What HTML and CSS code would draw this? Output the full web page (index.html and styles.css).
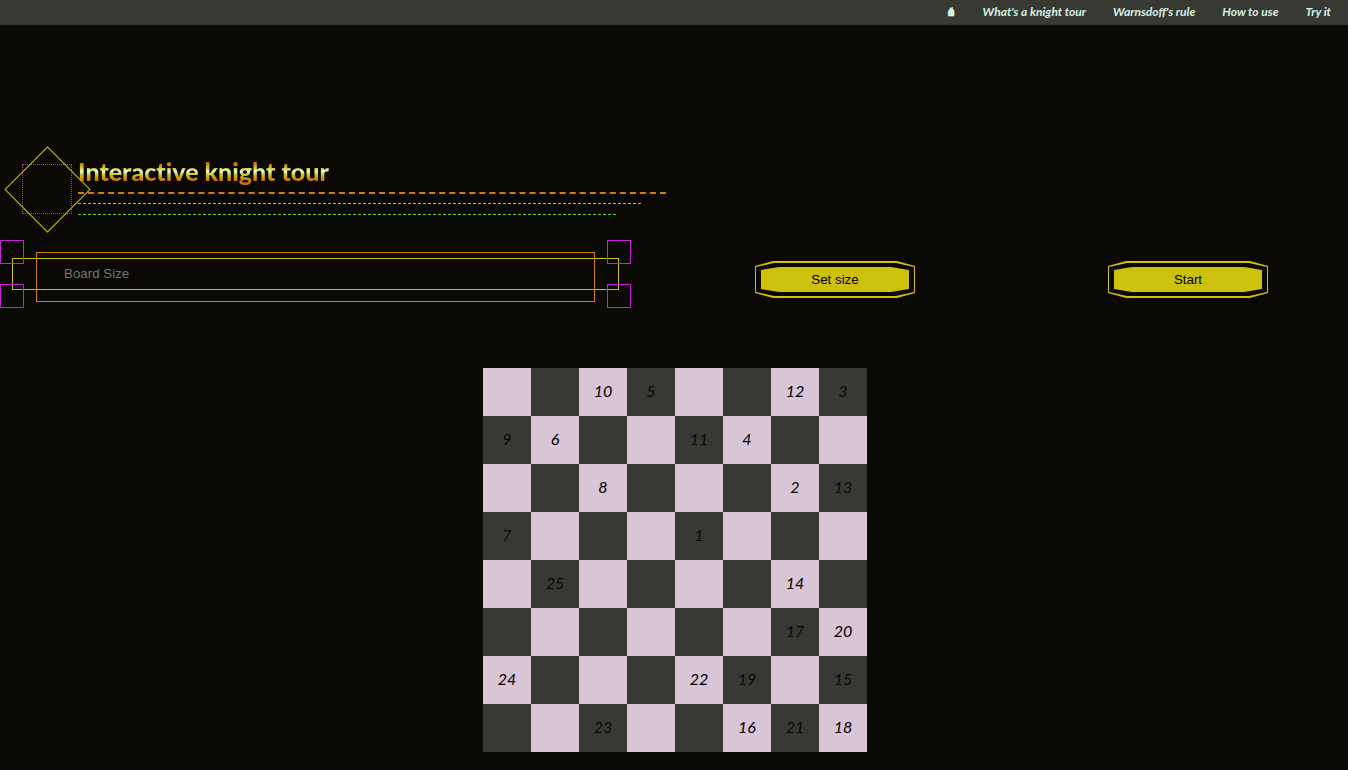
FILE: index.html
```
<!DOCTYPE html>
<html lang="en">
<head>
<meta charset="utf-8">
<title>Interactive knight tour</title>
<link rel="stylesheet" href="styles.css">
</head>
<body>
<header class="topbar">
  <nav class="nav">
    <a class="nav-link" href="#top">♞</a>
    <a class="nav-link" href="#knight">What's a knight tour</a>
    <a class="nav-link" href="#rule">Warnsdoff's rule</a>
    <a class="nav-link" href="#use">How to use</a>
    <a class="nav-link" href="#try">Try it</a>
  </nav>
</header>
<main>
  <section class="intro">
    <div class="emblem"></div>
    <div class="intro-body">
      <h1 class="title">Interactive knight tour</h1>
      <div class="rule rule-orange"></div>
      <div class="rule rule-yellow"></div>
      <div class="rule rule-green"></div>
    </div>
  </section>
  <form class="controls">
    <div class="field">
      <span class="corner corner-tl"></span>
      <span class="corner corner-tr"></span>
      <span class="corner corner-bl"></span>
      <span class="corner corner-br"></span>
      <span class="field-frame"></span>
      <input class="field-input" type="text" placeholder="Board Size" aria-label="Board Size">
    </div>
    <button class="btn" type="button"><span class="btn-label">Set size</span></button>
    <button class="btn" type="button"><span class="btn-label">Start</span></button>
  </form>
  <div class="board" id="board"></div>
</main>
<script src="board.js"></script>
</body>
</html>
```

FILE: styles.css
```
* {
  box-sizing: border-box;
}

:root {
  --ink: #0a0906;
  --slate: #393934;
  --lilac: #d8c6d6;
  --yellow: #cdc00f;
  --orange: #d27d10;
  --magenta: #c71fda;
  --green: #72cf10;
  --mint: #d5f2e3;
}

body {
  margin: 0;
  background: var(--ink);
  color: #000;
  font-family: Lato, "Liberation Sans", sans-serif;
}

.topbar {
  background: var(--slate);
}

.nav {
  display: flex;
  justify-content: flex-end;
  gap: 27px;
  padding: 0 17px 2px;
}

.nav-link {
  color: var(--mint);
  font-size: 12px;
  font-style: italic;
  font-weight: 700;
  line-height: 23px;
  text-decoration: none;
}

.intro {
  display: flex;
  gap: 6px;
  width: 50%;
  padding: 139px 8px 0 22px;
}

.emblem {
  position: relative;
  flex: none;
  width: 50px;
  height: 50px;
  border: 1px dotted var(--magenta);
}

.emblem::after {
  content: "";
  position: absolute;
  inset: -6px -7px -7px -6px;
  border: 1px solid var(--yellow);
  transform: rotate(45deg);
}

.intro-body {
  flex: 1;
}

.title {
  width: fit-content;
  margin: -8px 0 6px;
  font-size: 25px;
  font-variant-ligatures: none;
  font-weight: 900;
  line-height: 30px;
  background: linear-gradient(#d2700f 24%, #cdc00f 38%, #e0fbe0 51%, #cdc00f 64%, #d2700f 82%);
  background-clip: text;
  -webkit-background-clip: text;
  color: transparent;
}

.rule-orange {
  border-top: 2px dashed var(--orange);
}

.rule-yellow {
  margin: 9px 25px 0 0;
  border-top: 1px dashed var(--yellow);
}

.rule-green {
  margin: 10px 50px 0 0;
  border-top: 1px dashed var(--green);
}

.controls {
  display: grid;
  grid-template-columns: 642fr 386fr 320fr;
  align-items: center;
  justify-items: center;
  margin-top: 25px;
}

.field {
  position: relative;
  justify-self: stretch;
  margin-right: 11px;
  padding: 18px 12px;
}

.field-input {
  display: block;
  width: 100%;
  height: 32px;
  padding: 0 51px 2px;
  border: 1px solid var(--yellow);
  background: transparent;
  color: var(--yellow);
  font-family: "Liberation Sans", Arial, sans-serif;
  outline: none;
}

.field-input::placeholder {
  color: #757575;
}

.field-frame {
  position: absolute;
  inset: 12px 36px 6px;
  border: 1px solid var(--orange);
  pointer-events: none;
}

.corner {
  position: absolute;
  width: 24px;
  height: 24px;
  border: 1px solid var(--magenta);
}

.corner-tl { top: 0; left: 0; }
.corner-tr { top: 0; right: 0; }
.corner-bl { bottom: 0; left: 0; }
.corner-br { bottom: 0; right: 0; }

.btn {
  position: relative;
  width: 160px;
  height: 37px;
  margin-top: 11px;
  padding: 6px;
  border: 0;
  background: var(--yellow);
  clip-path: polygon(0 5px, 18px 0, calc(100% - 18px) 0, 100% 5px, 100% calc(100% - 5px), calc(100% - 18px) 100%, 18px 100%, 0 calc(100% - 5px));
  color: #000;
  font-family: "Liberation Sans", Arial, sans-serif;
  cursor: pointer;
}

.btn::before {
  content: "";
  position: absolute;
  inset: 2px 1px;
  background: var(--ink);
  clip-path: polygon(0 4px, 18px 0, calc(100% - 18px) 0, 100% 4px, 100% calc(100% - 4px), calc(100% - 18px) 100%, 18px 100%, 0 calc(100% - 4px));
}

.btn-label {
  position: relative;
  display: block;
  line-height: 25px;
  background: var(--yellow);
  clip-path: polygon(0 3px, 18px 0, calc(100% - 18px) 0, 100% 3px, 100% calc(100% - 3px), calc(100% - 18px) 100%, 18px 100%, 0 calc(100% - 3px));
}

.board {
  display: grid;
  grid-template-columns: repeat(8, 48px);
  justify-content: center;
  margin-top: 60px;
  padding: 0 0 18px 2px;
}

.cell {
  height: 48px;
  background: var(--slate);
  color: var(--ink);
  font-size: 16px;
  font-style: italic;
  line-height: 46px;
  text-align: center;
}

.cell-light {
  background: var(--lilac);
  color: #000;
}
```

FILE: board.js
```
const moves = [
  [0, 0, 10, 5, 0, 0, 12, 3],
  [9, 6, 0, 0, 11, 4, 0, 0],
  [0, 0, 8, 0, 0, 0, 2, 13],
  [7, 0, 0, 0, 1, 0, 0, 0],
  [0, 25, 0, 0, 0, 0, 14, 0],
  [0, 0, 0, 0, 0, 0, 17, 20],
  [24, 0, 0, 0, 22, 19, 0, 15],
  [0, 0, 23, 0, 0, 16, 21, 18]
];
const board = document.getElementById("board");
moves.forEach((row, y) => row.forEach((move, x) => {
  const cell = document.createElement("div");
  cell.className = (x + y) % 2 ? "cell" : "cell cell-light";
  cell.textContent = move || "";
  board.append(cell);
}));
```
